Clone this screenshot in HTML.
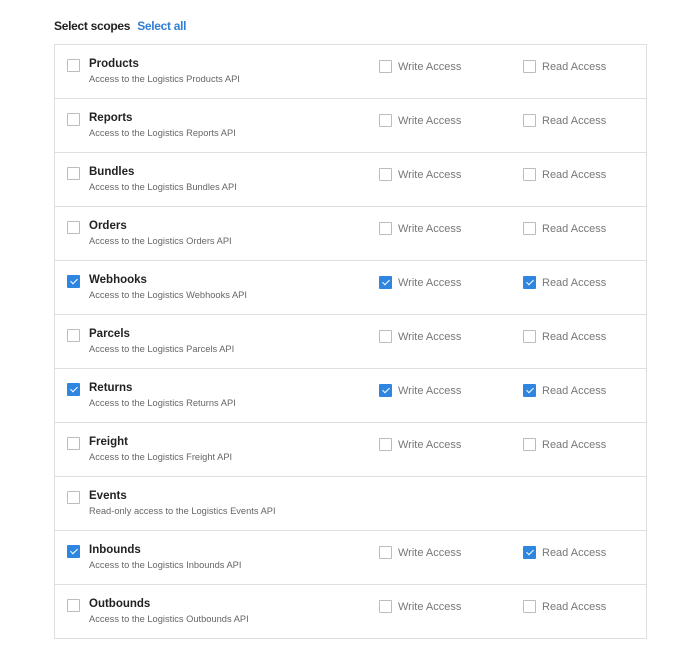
<!DOCTYPE html>
<html><head><style>
body{margin:0;background:#fff;font-family:"Liberation Sans",sans-serif;width:688px;height:658px;position:relative;overflow:hidden}
.hdr{position:absolute;left:54px;top:19px;font-size:12px;color:#222;font-weight:bold;letter-spacing:-0.3px}
.hdr span{color:#2f7fd6;margin-left:4px}
.box{position:absolute;left:54px;top:44px;width:591px;border:1px solid #dedfe3;border-bottom:none}
.row{position:relative;height:53px;border-bottom:1px solid #dedfe3}
.cb{position:absolute;width:11px;height:11px;border:1px solid #b9bcc2;border-radius:1px;background:#fff}
.cb.on{background:#2f86e0;border-color:#2f86e0}
.cb.on::after{content:"";position:absolute;left:3.5px;top:1px;width:3px;height:6px;border:solid #fff;border-width:0 1.5px 1.5px 0;transform:rotate(45deg)}
.t{position:absolute;left:34px;top:13px;font-size:11.5px;font-weight:bold;color:#222}
.d{position:absolute;left:34px;top:29px;font-size:9.3px;color:#666}
.l{position:absolute;top:16px;font-size:11px;color:#777}
</style></head><body>
<div class="hdr">Select scopes <span>Select all</span></div>
<div class="box" id="b"></div>
<script>
var rows=[["Products",0,0,0],["Reports",0,0,0],["Bundles",0,0,0],["Orders",0,0,0],["Webhooks",1,1,1],["Parcels",0,0,0],["Returns",1,1,1],["Freight",0,0,0],["Events",0,-1,-1],["Inbounds",1,0,1],["Outbounds",0,0,0]];
var h="";
rows.forEach(function(r){
var d=r[0]=="Events"?"Read-only access to the Logistics Events API":"Access to the Logistics "+r[0]+" API";
h+='<div class="row"><div class="cb'+(r[1]?' on':'')+'" style="left:12px;top:14px"></div><div class="t">'+r[0]+'</div><div class="d">'+d+'</div>';
if(r[2]>=0){h+='<div class="cb'+(r[2]?' on':'')+'" style="left:324px;top:15px"></div><div class="l" style="left:343px">Write Access</div>';
h+='<div class="cb'+(r[3]?' on':'')+'" style="left:468px;top:15px"></div><div class="l" style="left:487px">Read Access</div>';}
h+='</div>';});
document.getElementById('b').innerHTML=h;
</script>
</body></html>
